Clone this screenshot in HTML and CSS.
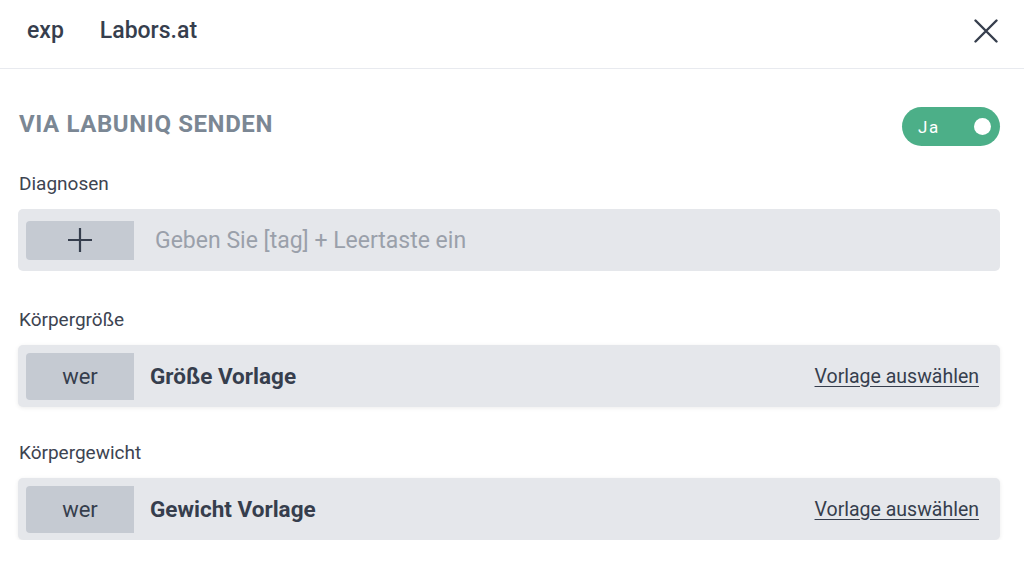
FILE: index.html
```html
<!DOCTYPE html>
<html lang="de">
<head>
  <meta charset="UTF-8">
  <meta name="viewport" content="width=device-width, initial-scale=1.0">
  <title>Labors.at</title>
  <link rel="stylesheet" href="styles.css">
</head>
<body>
  <header class="topbar">
    <nav class="tabs">
      <span class="tab">exp</span>
      <span class="tab">Labors.at</span>
    </nav>
    <button class="close" type="button" aria-label="Schließen">
      <svg width="24" height="24" viewBox="0 0 24 24">
        <path d="M1.5 1.5 L22.5 22.5 M22.5 1.5 L1.5 22.5" stroke="#363e4d" stroke-width="2.4" stroke-linecap="round" fill="none"/>
      </svg>
    </button>
  </header>

  <main class="content">
    <div class="title-row">
      <h2 class="section-title">VIA LABUNIQ SENDEN</h2>
      <label class="toggle">
        <span class="toggle-text">Ja</span>
        <span class="toggle-knob"></span>
      </label>
    </div>

    <div class="field field-first">
      <div class="field-label">Diagnosen</div>
      <div class="box box-tags">
        <button class="side-btn" type="button" aria-label="Hinzufügen">
          <svg width="26" height="26" viewBox="0 0 26 26">
            <path d="M13 1 V25 M1 13 H25" stroke="#363e4d" stroke-width="2.2" fill="none"/>
          </svg>
        </button>
        <input class="tag-input" type="text" placeholder="Geben Sie [tag] + Leertaste ein">
      </div>
    </div>

    <div class="field">
      <div class="field-label">Körpergröße</div>
      <div class="box box-template">
        <span class="side-btn tall">wer</span>
        <span class="template-name">Größe Vorlage</span>
        <a class="template-link" href="#">Vorlage auswählen</a>
      </div>
    </div>

    <div class="field field-last">
      <div class="field-label">Körpergewicht</div>
      <div class="box box-template">
        <span class="side-btn tall">wer</span>
        <span class="template-name">Gewicht Vorlage</span>
        <a class="template-link" href="#">Vorlage auswählen</a>
      </div>
    </div>
  </main>
</body>
</html>
```

FILE: styles.css
```css
body {
  font-family: 'Roboto', 'Liberation Sans', sans-serif;
  background-color: #fff;
  color: #363e4d;
  margin: 0;
  padding: 0;
}

.topbar {
  height: 68px;
  border-bottom: 1px solid #e8eaef;
  display: flex;
  align-items: center;
  justify-content: space-between;
  padding: 0 26px 0 27px;
}

.tabs {
  display: flex;
  gap: 36px;
  padding-bottom: 8px;
}

.tab {
  font-size: 23px;
  font-weight: 500;
  color: #363e4d;
}

.close {
  background: none;
  border: none;
  padding: 0;
  width: 24px;
  height: 24px;
  cursor: pointer;
  margin-bottom: 6px;
}

.content {
  padding: 0 24px 0 18px;
}

.title-row {
  display: flex;
  align-items: center;
  justify-content: space-between;
  margin-top: 38px;
  height: 39px;
}

.section-title {
  margin: 0 0 6px 1px;
  font-size: 24px;
  font-weight: 700;
  letter-spacing: 0.6px;
  color: #7b8794;
}

.toggle {
  width: 98px;
  height: 39px;
  border-radius: 20px;
  background-color: #4caf88;
  display: flex;
  align-items: center;
  justify-content: space-between;
  padding: 0 9px 0 16px;
  box-sizing: border-box;
}

.toggle-text {
  color: #fff;
  font-size: 17px;
  letter-spacing: 1.5px;
}

.toggle-knob {
  width: 17px;
  height: 17px;
  border-radius: 50%;
  background-color: #fff;
}

.field {
  margin-top: 38px;
}

.field-first {
  margin-top: 27px;
}

.field-last {
  margin-top: 35px;
}

.field-label {
  font-size: 19px;
  line-height: 22px;
  margin-left: 1px;
  margin-bottom: 14px;
  color: #3d4451;
}

.box {
  background-color: #e5e7eb;
  border-radius: 5px;
  display: flex;
  align-items: center;
  padding: 0 21px 0 8px;
}

.box-tags {
  height: 62px;
}

.box-template {
  height: 62px;
  box-shadow: 0 1px 4px rgba(0, 0, 0, 0.08);
}

.side-btn {
  width: 108px;
  height: 39px;
  background-color: #c5cad2;
  border: none;
  border-radius: 4px 0 0 4px;
  display: flex;
  align-items: center;
  justify-content: center;
  padding: 0;
  font-family: inherit;
  font-size: 22px;
  color: #363e4d;
  flex-shrink: 0;
}

.side-btn.tall {
  height: 47px;
}

.tag-input {
  flex: 1;
  border: none;
  background: transparent;
  font-family: inherit;
  font-size: 23px;
  margin-left: 19px;
  color: #363e4d;
  outline: none;
}

.tag-input::placeholder {
  color: #9aa0aa;
}

.template-name {
  flex: 1;
  margin-left: 16px;
  font-size: 22.5px;
  font-weight: 700;
  color: #363e4d;
}

.template-link {
  font-size: 19.5px;
  color: #363e4d;
  text-decoration: underline;
  text-underline-offset: 3px;
}
```
